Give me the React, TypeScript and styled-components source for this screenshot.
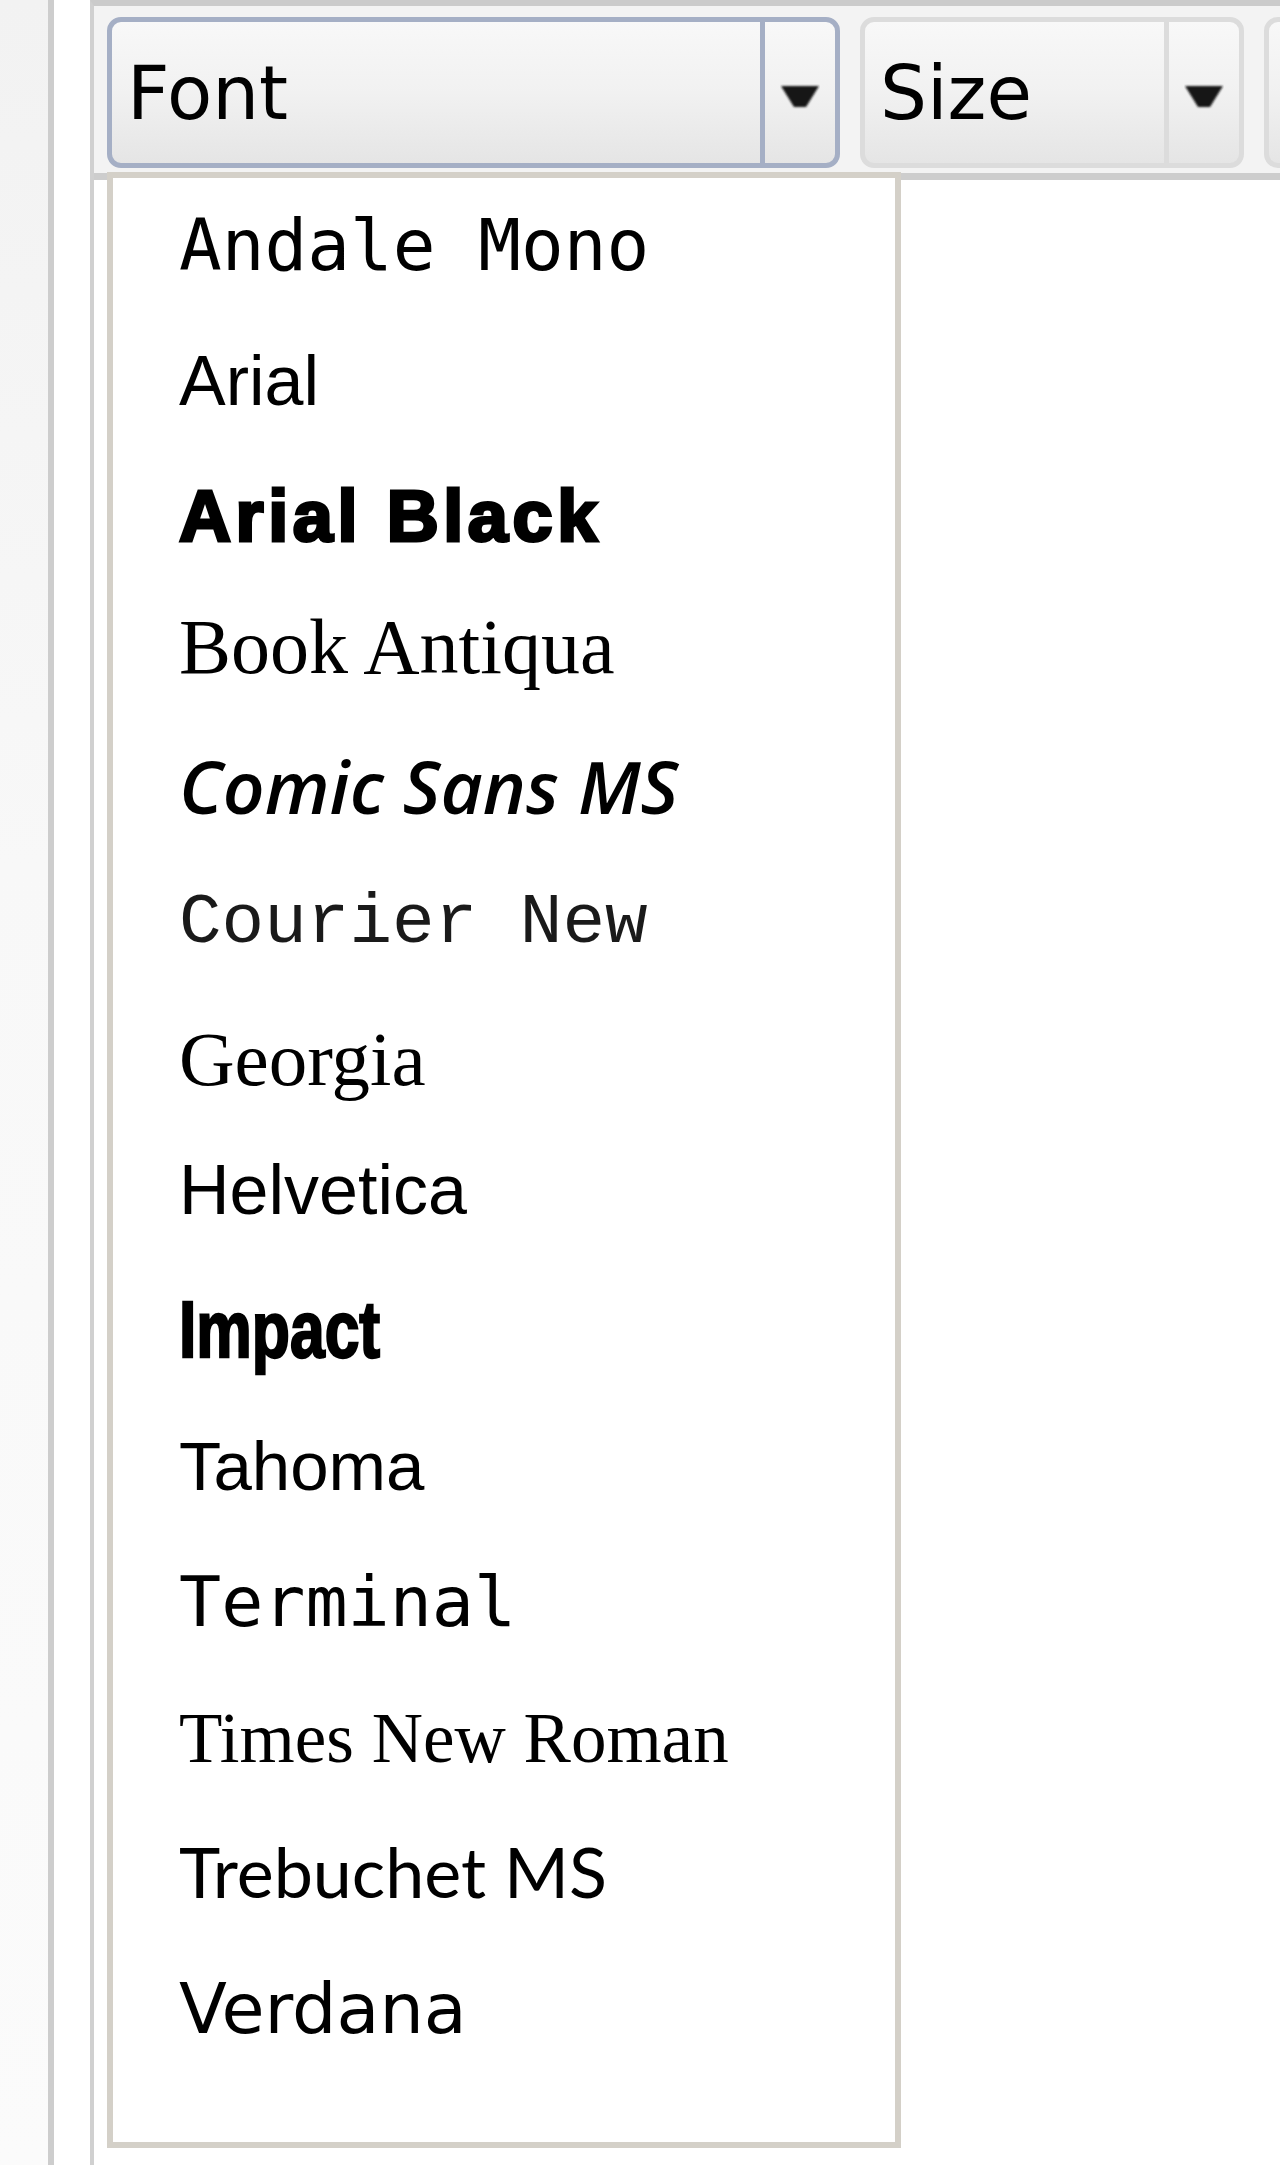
import React from "react";
import styled, { createGlobalStyle } from "styled-components";

const GlobalStyle = createGlobalStyle`
  html, body {
    margin: 0;
    padding: 0;
    background: #ffffff;
    overflow: hidden;
  }
  body {
    width: 1280px;
    font-family: "DejaVu Sans", "Liberation Sans", sans-serif;
  }
`;

const Page = styled.div`
  display: flex;
  width: 1280px;
  height: 2165px;
  overflow: hidden;
`;

const Sidebar = styled.div`
  flex: 0 0 48px;
  background: linear-gradient(180deg, #f2f2f2 0%, #f8f8f8 40%, #fbfbfb 100%);
  border-right: 6px solid #cdcdcd;
`;

const Gutter = styled.div`
  flex: 0 0 36px;
  background: #ffffff;
`;

const Editor = styled.div`
  position: relative;
  flex: 1;
  min-width: 0;
  border-left: 4px solid #d0d0d0;
  border-top: 6px solid #cbcbcb;
  background: #ffffff;
`;

const Toolbar = styled.div`
  display: flex;
  align-items: flex-start;
  gap: 20px;
  height: 174px;
  padding: 11px 0 0 13px;
  box-sizing: border-box;
  background: #f3f3f3;
  border-bottom: 7px solid #cdcdcd;
  overflow: hidden;
`;

const SplitButton = styled.div<{ $w: number; $active?: boolean }>`
  flex: 0 0 ${(p) => p.$w}px;
  display: flex;
  height: 151px;
  box-sizing: border-box;
  border: 5px solid ${(p) => (p.$active ? "#a5afc5" : "#dcdcdc")};
  border-radius: 14px;
  background: linear-gradient(180deg, #f8f8f8 0%, #f1f1f1 50%, #e5e5e5 100%);
  overflow: hidden;
`;

const Label = styled.div`
  flex: 1;
  display: flex;
  align-items: center;
  padding-left: 15px;
  font-family: "DejaVu Sans", sans-serif;
  font-size: 74px;
  color: #000;
  white-space: nowrap;
`;

const ArrowPart = styled.div<{ $active?: boolean }>`
  flex: 0 0 70px;
  display: flex;
  align-items: center;
  justify-content: center;
  border-left: 5px solid ${(p) => (p.$active ? "#a5afc5" : "#dcdcdc")};
`;

const CaretSvg = styled.svg`
  margin-top: 8px;
`;

const Caret = () => (
  <CaretSvg width="40" height="26" viewBox="0 0 40 26">
    <defs>
      <filter id="soft" x="-20%" y="-20%" width="140%" height="140%">
        <feGaussianBlur stdDeviation="0.9" />
      </filter>
    </defs>
    <polygon points="1,2 39,2 26,23 14,23" fill="#151515" filter="url(#soft)" />
  </CaretSvg>
);

const Menu = styled.div`
  position: absolute;
  left: 13px;
  top: 166px;
  width: 794px;
  height: 1976px;
  box-sizing: border-box;
  border: 6px solid #d4d0c8;
  background: #ffffff;
  padding: 0 0 64px 66px;
  z-index: 5;
`;

type FontItem = {
  name: string;
  family: string;
  size: number;
  weight?: number;
  italic?: boolean;
  spacing?: number;
  stroke?: number;
  squeeze?: number;
  color?: string;
  dy?: number;
};

const Option = styled.div<{
  $family: string;
  $size: number;
  $weight: number;
  $italic: boolean;
  $spacing: number;
  $stroke: number;
  $color: string;
}>`
  height: 135.7px;
  line-height: 135.7px;
  white-space: nowrap;
  transform-origin: 0 50%;
  font-family: ${(p) => p.$family};
  font-size: ${(p) => p.$size}px;
  font-weight: ${(p) => p.$weight};
  font-style: ${(p) => (p.$italic ? "italic" : "normal")};
  letter-spacing: ${(p) => p.$spacing}px;
  -webkit-text-stroke: ${(p) => p.$stroke}px ${(p) => p.$color};
  color: ${(p) => p.$color};
`;

const fonts: FontItem[] = [
  { name: "Andale Mono", family: '"DejaVu Sans Mono", monospace', size: 71 },
  { name: "Arial", family: '"Liberation Sans", sans-serif', size: 70 },
  {
    name: "Arial Black",
    family: '"Liberation Sans", sans-serif',
    size: 72,
    weight: 700,
    spacing: 4.6,
    stroke: 3.2,
  },
  { name: "Book Antiqua", family: '"Liberation Serif", serif', size: 78, dy: -6 },
  {
    name: "Comic Sans MS",
    family: '"Open Sans", sans-serif',
    size: 73,
    weight: 600,
    italic: true,
    dy: -3,
  },
  { name: "Courier New", family: '"Liberation Mono", monospace', size: 71, color: "#1a1a1a" },
  { name: "Georgia", family: '"Liberation Serif", serif', size: 77 },
  { name: "Helvetica", family: '"Liberation Sans", sans-serif', size: 70, dy: -5 },
  {
    name: "Impact",
    family: '"Liberation Sans", sans-serif',
    size: 80,
    weight: 700,
    stroke: 2.4,
    squeeze: 0.78,
    dy: -2,
  },
  { name: "Tahoma", family: '"Liberation Sans", sans-serif', size: 69 },
  { name: "Terminal", family: '"DejaVu Sans Mono", monospace', size: 70 },
  { name: "Times New Roman", family: '"Liberation Serif", serif', size: 71 },
  { name: "Trebuchet MS", family: '"Lato", sans-serif', size: 70, dy: -2 },
  { name: "Verdana", family: '"DejaVu Sans", sans-serif', size: 70 },
];

const optionTransform = (f: FontItem) => {
  const parts: string[] = [];
  if (f.dy) parts.push(`translateY(${f.dy}px)`);
  if (f.squeeze) parts.push(`scaleX(${f.squeeze})`);
  return parts.length ? { transform: parts.join(" ") } : undefined;
};

export default function App() {
  return (
    <>
      <GlobalStyle />
      <Page>
        <Sidebar />
        <Gutter />
        <Editor>
          <Toolbar>
            <SplitButton $w={733} $active>
              <Label>Font</Label>
              <ArrowPart $active>
                <Caret />
              </ArrowPart>
            </SplitButton>
            <SplitButton $w={384}>
              <Label>Size</Label>
              <ArrowPart>
                <Caret />
              </ArrowPart>
            </SplitButton>
            <SplitButton $w={300}>
              <Label />
            </SplitButton>
          </Toolbar>

          <Menu>
            {fonts.map((f) => (
              <Option
                key={f.name}
                $family={f.family}
                $size={f.size}
                $weight={f.weight ?? 400}
                $italic={!!f.italic}
                $spacing={f.spacing ?? 0}
                $stroke={f.stroke ?? 0}
                $color={f.color ?? "#000"}
                style={optionTransform(f)}
              >
                {f.name}
              </Option>
            ))}
          </Menu>
        </Editor>
      </Page>
    </>
  );
}
